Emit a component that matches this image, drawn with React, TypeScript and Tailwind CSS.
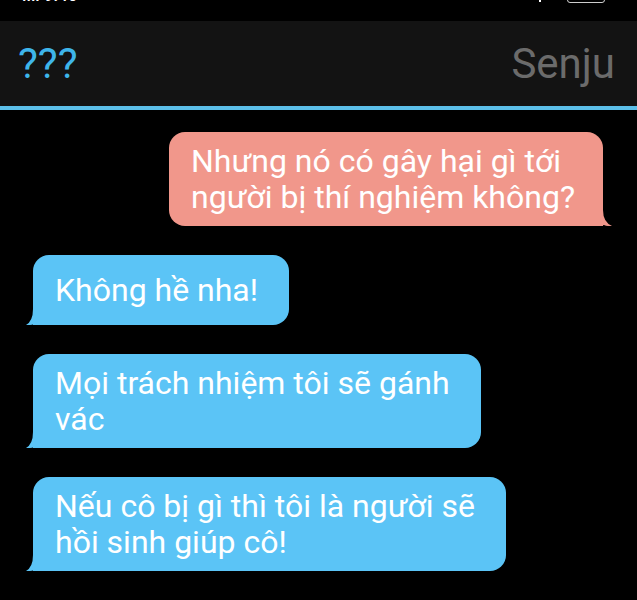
const messages = [
  { mine: true, lines: ["Nhưng nó có gây hại gì tới", "người bị thí nghiệm không?"] },
  { mine: false, lines: ["Không hề nha!"] },
  { mine: false, lines: ["Mọi trách nhiệm tôi sẽ gánh", "vác"] },
  { mine: false, lines: ["Nếu cô bị gì thì tôi là người sẽ", "hồi sinh giúp cô!"] },
];

function Tail({ mine }: { mine: boolean }) {
  if (mine) {
    return (
      <svg
        viewBox="0 0 16 16"
        className="absolute -right-[9px] bottom-0 h-[16px] w-[16px] text-[#f1978b]"
        fill="currentColor"
      >
        <path d="M0 0 L7 0 Q7 12 16 16 Q12 16.5 8 15 Q5 16 0 16 Z" />
      </svg>
    );
  }
  return (
    <svg
      viewBox="0 0 16 16"
      className="absolute -left-[7px] bottom-0 h-[16px] w-[16px] text-[#5bc4f6]"
      fill="currentColor"
    >
      <path d="M16 0 L7 0 Q7 12 0 16 Q4 16.5 8 15 Q11 16 16 16 Z" />
    </svg>
  );
}

export default function App() {
  return (
    <div className="h-[600px] w-[637px] overflow-hidden bg-black font-['Roboto',sans-serif]">
      {/* status bar, cut off at the top */}
      <div className="flex h-[21px] items-start justify-between overflow-hidden pl-[22px] pr-[32px]">
        <div className="-mt-[13px] text-[17px] font-medium leading-none text-white">ıııl 9:46</div>
        <div className="-mt-[10px] flex items-start gap-[26px]">
          <div className="mt-[2px] h-[10px] w-[2px] bg-white" />
          <div className="h-[13px] w-[38px] rounded-[3px] border-[1.5px] border-white/80" />
        </div>
      </div>

      {/* header */}
      <div className="flex h-[85px] items-center justify-between bg-[#131313] pl-[18px] pr-[22px]">
        <span className="text-[42px] leading-none text-[#3eb5ea]">???</span>
        <span className="text-[42px] leading-none text-[#6b6b6b]">Senju</span>
      </div>
      <div className="h-[4px] bg-[#5cbfe9]" />

      {/* messages */}
      <div className="flex flex-col gap-[29px] pt-[22px]">
        {messages.map((m, i) => (
          <div key={i} className={m.mine ? "flex justify-end pr-[34px]" : "flex justify-start pl-[33px]"}>
            <div
              className={
                m.mine
                  ? "relative rounded-[16px] rounded-br-none bg-[#f1978b] pl-[22px] pr-[28px] py-[11px]"
                  : "relative flex min-h-[70px] items-center rounded-[16px] rounded-bl-none bg-[#5bc4f6] pl-[22px] pr-[31px] py-[11px]"
              }
            >
              <p className="whitespace-nowrap text-[32px] leading-[36px] text-white">
                {m.lines.map((l, j) => (
                  <span key={j} className="block">
                    {l}
                  </span>
                ))}
              </p>
              <Tail mine={m.mine} />
            </div>
          </div>
        ))}
      </div>
    </div>
  );
}
